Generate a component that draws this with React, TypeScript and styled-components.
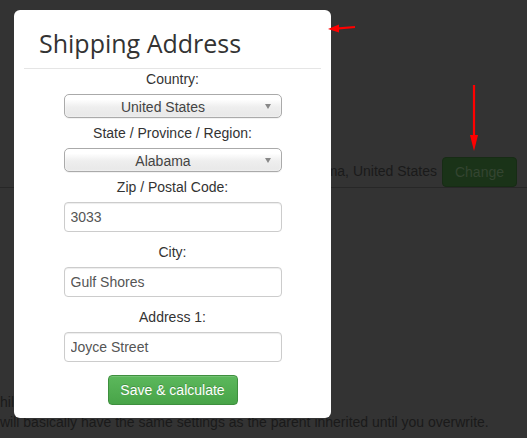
import React from "react";
import styled, { createGlobalStyle } from "styled-components";

const GlobalStyle = createGlobalStyle`
  html, body { margin: 0; padding: 0; background: #333; }
  body { font-family: "Liberation Sans", Arial, sans-serif; }
  * { box-sizing: border-box; }
`;

const Page = styled.div`
  position: relative;
  width: 527px;
  height: 438px;
  overflow: hidden;
  background: #333;
  display: flex;
  flex-direction: column;
  font-family: "Liberation Sans", Arial, sans-serif;
  font-size: 14px;
  color: #1c1c1c;
`;

const SummaryRow = styled.div`
  margin-top: 157px;
  display: flex;
  align-items: center;
  justify-content: flex-end;
  gap: 5px;
  padding-right: 10px;
  border-bottom: 1px solid #272727;
  line-height: 20px;
`;

const SummaryText = styled.span`
  color: #1a1a1a;
  position: relative;
  top: -1px;
`;

const DimButton = styled.span`
  display: inline-flex;
  align-items: center;
  justify-content: center;
  height: 30px;
  padding: 0 12px;
  border-radius: 4px;
  background: #1a3318;
  border: 1px solid #172c15;
  color: #344531;
  font-size: 14px;
`;

const Notes = styled.div`
  margin-top: auto;
  padding-bottom: 6px;
  line-height: 20px;
  color: #1a1a1a;
  white-space: nowrap;
`;

const Modal = styled.div`
  position: absolute;
  left: 14px;
  top: 10px;
  width: 317px;
  padding: 10px;
  background: #fff;
  border-radius: 6px;
`;

const Header = styled.div`
  padding: 10px 15px 11px;
  border-bottom: 1px solid #e5e5e5;
`;

const Title = styled.h3`
  margin: 0;
  font-family: "Open Sans", "Liberation Sans", sans-serif;
  font-weight: 500;
  font-size: 25px;
  line-height: 27px;
  color: #333;
`;

const Body = styled.form`
  display: flex;
  flex-direction: column;
  align-items: center;
  padding-bottom: 3px;
`;

const Label = styled.label`
  font-size: 14px;
  line-height: 20px;
  color: #333;
  margin-bottom: 5px;
`;

const SelectWrap = styled.div`
  position: relative;
  width: 218px;
  margin-bottom: 5px;
  &::after {
    content: "";
    position: absolute;
    right: 11px;
    top: 10px;
    border-left: 3.5px solid transparent;
    border-right: 3.5px solid transparent;
    border-top: 5px solid #888;
    pointer-events: none;
  }
`;

const Select = styled.select`
  appearance: none;
  -webkit-appearance: none;
  width: 100%;
  height: 24px;
  padding: 1px 24px 0 5px;
  border: 1px solid #aaa;
  border-radius: 5px;
  background: linear-gradient(#fff 20%, #eee 55%, #e8e8e8);
  box-shadow: 0 0 2px #fff inset, 0 1px 0 rgba(0, 0, 0, 0.05);
  font-family: "Liberation Sans", Arial, sans-serif;
  font-size: 14px;
  color: #444;
  text-align: center;
  text-align-last: center;
  outline: none;
`;

const Input = styled.input`
  width: 218px;
  height: 30px;
  padding: 0 6px;
  margin-bottom: 10px;
  border: 1px solid #ccc;
  border-radius: 4px;
  box-shadow: inset 0 1px 1px rgba(0, 0, 0, 0.075);
  font-family: "Liberation Sans", Arial, sans-serif;
  font-size: 14px;
  color: #555;
  outline: none;
`;

const SaveButton = styled.button`
  margin-top: 3px;
  width: 130px;
  height: 30px;
  border: 1px solid #3e8f3e;
  border-radius: 4px;
  background: linear-gradient(#5cb85c, #48a448);
  color: #fff;
  font-family: "Liberation Sans", Arial, sans-serif;
  font-size: 14px;
  text-shadow: 0 -1px 0 rgba(0, 0, 0, 0.2);
  box-shadow: inset 0 1px 0 rgba(255, 255, 255, 0.15);
  cursor: pointer;
`;

const Annotation = styled.svg`
  position: absolute;
  overflow: visible;
`;

const SelectField = ({ value }: { value: string }) => (
  <SelectWrap>
    <Select defaultValue={value}>
      <option value={value}>{value}</option>
    </Select>
  </SelectWrap>
);

export default function App() {
  return (
    <>
      <GlobalStyle />
      <Page>
        <SummaryRow>
          <SummaryText>Gulf Shores, Alabama, United States</SummaryText>
          <DimButton>Change</DimButton>
        </SummaryRow>
        <Notes>
          <div>hil</div>
          <div>will basically have the same settings as the parent inherited until you overwrite.</div>
        </Notes>

        <Modal>
          <Header>
            <Title>Shipping Address</Title>
          </Header>
          <Body onSubmit={(e) => e.preventDefault()}>
            <Label>Country:</Label>
            <SelectField value="United States" />
            <Label>State / Province / Region:</Label>
            <SelectField value="Alabama" />
            <Label>Zip / Postal Code:</Label>
            <Input defaultValue="3033" />
            <Label>City:</Label>
            <Input defaultValue="Gulf Shores" />
            <Label>Address 1:</Label>
            <Input defaultValue="Joyce Street" />
            <SaveButton type="submit">Save &amp; calculate</SaveButton>
          </Body>
        </Modal>

        <Annotation style={{ left: 328, top: 22 }} width="28" height="12" viewBox="0 0 28 12">
          <line x1="27" y1="5" x2="8" y2="6.6" stroke="#f00" strokeWidth="2.2" />
          <polygon points="0,7 11,2.5 11,10.5" fill="#f00" />
        </Annotation>
        <Annotation style={{ left: 469, top: 85 }} width="10" height="67" viewBox="0 0 10 67">
          <line x1="5" y1="0" x2="5" y2="55" stroke="#f00" strokeWidth="2.2" />
          <polygon points="5,66 1,50 9,50" fill="#f00" />
        </Annotation>
      </Page>
    </>
  );
}
